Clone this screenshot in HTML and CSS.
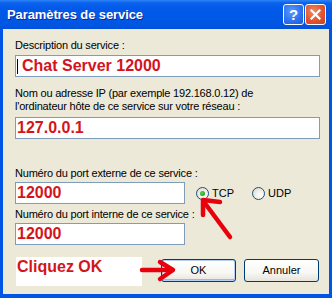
FILE: index.html
```html
<!DOCTYPE html>
<html lang="fr">
<head>
<meta charset="utf-8">
<title>Paramètres de service</title>
<link rel="stylesheet" href="styles.css">
</head>
<body>
<div class="window">
  <div class="titlebar">
    <span class="title">Paramètres de service</span>
    <div class="caption-btns">
      <span class="cbtn help">?</span>
      <span class="cbtn close"><svg width="11" height="11" viewBox="0 0 11 11"><path d="M1.5 1.5 L9.5 9.5 M9.5 1.5 L1.5 9.5" stroke="#fff" stroke-width="2.2" stroke-linecap="square"/></svg></span>
    </div>
  </div>
  <div class="client">
    <div class="label l1">Description du service :</div>
    <div class="field wide f1"><span class="caret"></span>Chat Server 12000</div>
    <div class="label l2">Nom ou adresse IP (par exemple 192.168.0.12) de<br>l'ordinateur hôte de ce service sur votre réseau :</div>
    <div class="field wide f2">127.0.0.1</div>
    <div class="label l3">Numéro du port externe de ce service :</div>
    <div class="row">
      <div class="field short">12000</div>
      <div class="radios">
        <span class="radio"><span class="rb checked"></span>TCP</span>
        <span class="radio"><span class="rb"></span>UDP</span>
      </div>
    </div>
    <div class="label l4">Numéro du port interne de ce service :</div>
    <div class="field short f4">12000</div>
    <div class="bottom">
      <div class="note">Cliquez OK</div>
      <div class="buttons">
        <span class="btn default">OK</span>
        <span class="btn">Annuler</span>
      </div>
    </div>
  </div>
  <svg class="arrows" width="332" height="298" viewBox="0 0 332 298">
    <g stroke="#E8000C" stroke-width="4.5" fill="none" stroke-linecap="round" stroke-linejoin="round">
      <path d="M230 237 L204 202"/>
      <path d="M220 202 L203 200 L203 215"/>
      <path d="M142 270 L172 270"/>
      <path d="M160 262 L173 270 L160 279"/>
    </g>
  </svg>
</div>
</body>
</html>
```

FILE: styles.css
```css
html, body {
  margin: 0;
  padding: 0;
  background: #ECE9D8;
}
.window {
  position: relative;
  width: 332px;
  height: 298px;
  display: flex;
  flex-direction: column;
  background: #0055E5;
  box-sizing: border-box;
  overflow: hidden;
  font-family: "Liberation Sans", Arial, sans-serif;
}
.titlebar {
  height: 29px;
  flex: none;
  display: flex;
  align-items: center;
  justify-content: space-between;
  padding: 0 6px 0 7px;
  background: linear-gradient(to bottom, #2C83F6 0px, #0A62EC 3px, #035AE9 8px, #0058E6 18px, #0055E0 26px, #0050D8 29px);
}
.title {
  color: #fff;
  font-weight: bold;
  font-size: 13px;
  letter-spacing: -0.1px;
  text-shadow: 1px 1px 0 #0A2A98;
  margin-top: -1px;
}
.caption-btns {
  display: flex;
  gap: 1px;
  margin-top: -1px;
}
.cbtn {
  width: 19px;
  height: 19px;
  border: 1px solid #fff;
  border-radius: 3px;
  display: flex;
  align-items: center;
  justify-content: center;
  color: #fff;
  font-weight: bold;
  font-size: 15px;
  font-family: "Liberation Sans", Arial, sans-serif;
}
.help {
  background: radial-gradient(circle at 40% 35%, #5C9BFF 0%, #2E73F0 55%, #1A56D8 100%);
}
.close {
  background: radial-gradient(circle at 40% 35%, #F08A64 0%, #E2542E 55%, #C8401F 100%);
}
.client {
  flex: 1;
  margin: 0 3px 4px 3px;
  background: #ECE9D8;
  padding: 10px 10px 0 12px;
  display: flex;
  flex-direction: column;
  align-items: flex-start;
}
.label {
  font-size: 11px;
  line-height: 13px;
  letter-spacing: -0.2px;
  color: #000;
  white-space: nowrap;
}
.l2 { margin-top: 10px; }
.l3 { margin-top: 28px; }
.l4 { margin-top: 4px; }
.field {
  box-sizing: border-box;
  height: 22px;
  border: 1px solid #7F9DB9;
  background: #fff;
  color: #D4141C;
  font-weight: bold;
  font-size: 16px;
  line-height: 20px;
  padding-left: 1px;
  display: flex;
  align-items: center;
}
.wide { width: 305px; }
.short { width: 170px; }
.f1 { margin-top: 3px; }
.f2 { margin-top: 4px; }
.row {
  margin-top: 2px;
  display: flex;
  align-items: center;
}
.f4 { margin-top: 2px; }
.caret {
  width: 1px;
  height: 15px;
  background: #000;
  margin-right: 4px;
}
.radios {
  display: flex;
  gap: 18px;
  margin-left: 11px;
}
.radio {
  display: flex;
  align-items: center;
  gap: 3px;
  font-size: 11px;
  color: #000;
}
.rb {
  box-sizing: border-box;
  width: 13px;
  height: 13px;
  border: 1px solid #1C5180;
  border-radius: 50%;
  background: radial-gradient(circle at 65% 65%, #FFFFFF 0%, #F2F1EA 40%, #D4D1C4 100%);
  display: flex;
  align-items: center;
  justify-content: center;
}
.rb.checked::after {
  content: "";
  width: 5px;
  height: 5px;
  border-radius: 50%;
  background: radial-gradient(circle at 40% 40%, #5AD15A 0%, #21A121 70%);
}
.bottom {
  margin-top: 12px;
  width: 100%;
  display: flex;
  align-items: center;
  justify-content: space-between;
}
.note {
  margin-left: 1px;
  width: 126px;
  height: 29px;
  background: #fff;
  color: #D4141C;
  font-weight: bold;
  font-size: 16px;
  line-height: 20px;
  padding-left: 1px;
  box-sizing: border-box;
}
.buttons {
  display: flex;
  gap: 8px;
  margin-top: -3px;
}
.btn {
  box-sizing: border-box;
  width: 75px;
  height: 23px;
  border: 1px solid #003C74;
  border-radius: 3px;
  background: linear-gradient(to bottom, #FFFFFF 0%, #F7F7F4 60%, #E6E4DA 100%);
  display: flex;
  align-items: center;
  justify-content: center;
  font-size: 11px;
  color: #000;
}
.btn.default {
  box-shadow: inset 0 0 0 1px #B8D0F4, inset 0 -1px 0 1px #9AB8EC;
}
.arrows {
  position: absolute;
  left: 0;
  top: 0;
  pointer-events: none;
}
```
